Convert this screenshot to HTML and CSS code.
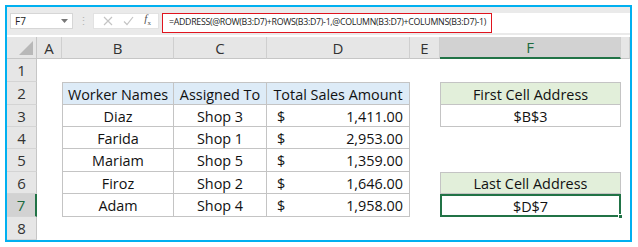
FILE: index.html
```html
<!DOCTYPE html>
<html lang="en">
<head>
    <meta charset="UTF-8">
    <title>ADDRESS formula</title>
    <link rel="stylesheet" href="styles.css">
</head>
<body>
    <div class="frame">
        <div class="formula-bar">
            <div class="name-box">
                <span class="name">F7</span>
                <svg class="caret" width="7" height="4" viewBox="0 0 7 4"><path d="M0 0h7L3.5 4z" fill="#777"/></svg>
            </div>
            <div class="dots">&#8942;</div>
            <div class="icon-box">
                <svg class="icon" width="10" height="10" viewBox="0 0 10 10"><path d="M1 1l8 8M9 1l-8 8" stroke="#c4c4c4" stroke-width="1.2"/></svg>
                <svg class="icon" width="11" height="10" viewBox="0 0 11 10"><path d="M1 5.5l3 3L10 1" stroke="#c4c4c4" stroke-width="1.2" fill="none"/></svg>
                <span class="fx"><i>f</i><sub>x</sub></span>
            </div>
            <div class="formula">
                <div class="formula-text">=ADDRESS(@ROW(B3:D7)+ROWS(B3:D7)-1,@COLUMN(B3:D7)+COLUMNS(B3:D7)-1)</div>
            </div>
        </div>

        <div class="sheet">
            <!-- column headers -->
            <div class="corner"><span class="tri"></span></div>
            <div class="col-head">A</div>
            <div class="col-head">B</div>
            <div class="col-head">C</div>
            <div class="col-head">D</div>
            <div class="col-head">E</div>
            <div class="col-head active">F</div>
            <div class="col-head"></div>

            <!-- row headers -->
            <div class="row-head r1">1</div>
            <div class="row-head r2">2</div>
            <div class="row-head r3">3</div>
            <div class="row-head r4">4</div>
            <div class="row-head r5">5</div>
            <div class="row-head r6">6</div>
            <div class="row-head r7 active">7</div>
            <div class="row-head r8">8</div>
            <div class="row-head r9"></div>

            <!-- table B2:D7 -->
            <div class="cell head top left cb r2">Worker Names</div>
            <div class="cell head top cc r2">Assigned To</div>
            <div class="cell head top cd r2">Total Sales Amount</div>

            <div class="cell left cb r3">Diaz</div>
            <div class="cell cc r3">Shop 3</div>
            <div class="cell money cd r3"><span>$</span><span>1,411.00</span></div>

            <div class="cell left cb r4">Farida</div>
            <div class="cell cc r4">Shop 1</div>
            <div class="cell money cd r4"><span>$</span><span>2,953.00</span></div>

            <div class="cell left cb r5">Mariam</div>
            <div class="cell cc r5">Shop 5</div>
            <div class="cell money cd r5"><span>$</span><span>1,359.00</span></div>

            <div class="cell left cb r6">Firoz</div>
            <div class="cell cc r6">Shop 2</div>
            <div class="cell money cd r6"><span>$</span><span>1,646.00</span></div>

            <div class="cell left cb r7">Adam</div>
            <div class="cell cc r7">Shop 4</div>
            <div class="cell money cd r7"><span>$</span><span>1,958.00</span></div>

            <!-- result cells -->
            <div class="cell result top left cf r2">First Cell Address</div>
            <div class="cell left cf r3">$B$3</div>
            <div class="cell result top left cf r6">Last Cell Address</div>
            <div class="cell selected cf r7">$D$7<span class="handle"></span></div>
        </div>
    </div>
</body>
</html>
```

FILE: styles.css
```css
* {
    margin: 0;
    padding: 0;
    box-sizing: border-box;
}

body {
    background: #fff;
    font-family: "Open Sans", sans-serif;
}

.frame {
    margin: 5px;
    width: 627px;
    height: 237px;
    border: 2px solid #00b0f0;
    background: #fff;
    overflow: hidden;
}

/* formula bar */
.formula-bar {
    height: 28px;
    background: #eaeaea;
    display: flex;
    align-items: flex-start;
    padding: 6px 0 0 3px;
}
.name-box {
    width: 63px;
    height: 16px;
    background: #fff;
    border: 1px solid #d6d6d6;
    display: flex;
    align-items: center;
    justify-content: space-between;
    padding: 0 4px 0 4px;
    font-size: 10px;
}
.name {
    color: #222;
}
.dots {
    width: 20px;
    text-align: center;
    color: #b5b5b5;
    font-size: 11px;
    line-height: 16px;
}
.icon-box {
    width: 66px;
    height: 16px;
    background: #fff;
    border: 1px solid #e2e2e2;
    display: flex;
    align-items: center;
    justify-content: space-around;
    padding: 0 2px 0 4px;
}
.fx {
    font-family: "Liberation Serif", serif;
    font-size: 11px;
    color: #555;
    line-height: 12px;
}
.fx sub {
    font-size: 7px;
}
.formula {
    margin-left: 3px;
    flex: 1;
    height: 20px;
    background: #fff;
}
.formula-text {
    width: 330px;
    height: 20px;
    border: 1.5px solid #e0141e;
    font-size: 8.8px;
    letter-spacing: -0.3px;
    line-height: 17px;
    padding-left: 6px;
    color: #222;
    white-space: nowrap;
    overflow: hidden;
}

/* grid */
.sheet {
    margin-top: 2px;
    display: grid;
    grid-template-columns: 30px 25px 112px 93px 143px 30px 181px 1fr;
    grid-template-rows: 22px 23px 23px 22px 22px 23px 22px 23px 23px 1fr;
    font-size: 14.4px;
    color: #111;
}
.corner {
    grid-row: 1;
    grid-column: 1;
    background: #e6e6e6;
    border-right: 1px solid #c6c6c6;
    border-bottom: 1px solid #c6c6c6;
    position: relative;
}
.tri {
    position: absolute;
    right: 3px;
    bottom: 3px;
    width: 0;
    height: 0;
    border-left: 14px solid transparent;
    border-bottom: 14px solid #b8b8b8;
}
.col-head {
    grid-row: 1;
    background: #e6e6e6;
    border-right: 1px solid #cfcfcf;
    border-bottom: 1px solid #c6c6c6;
    display: flex;
    align-items: center;
    justify-content: center;
    color: #333;
    font-size: 15px;
}
.col-head.active {
    background: #d2d2d2;
    border-bottom: 2px solid #217346;
    color: #1e6b3f;
}
.row-head {
    grid-column: 1;
    background: #e6e6e6;
    border-right: 1px solid #c6c6c6;
    border-bottom: 1px solid #d4d4d4;
    display: flex;
    align-items: center;
    justify-content: center;
    color: #333;
    font-size: 15px;
}
.row-head.active {
    background: #d2d2d2;
    border-right: 2px solid #217346;
    color: #1e6b3f;
}
.r1 { grid-row: 2; }
.r2 { grid-row: 3; }
.r3 { grid-row: 4; }
.r4 { grid-row: 5; }
.r5 { grid-row: 6; }
.r6 { grid-row: 7; }
.r7 { grid-row: 8; }
.r8 { grid-row: 9; }
.r9 { grid-row: 10; }

.cb { grid-column: 3; }
.cc { grid-column: 4; }
.cd { grid-column: 5; }
.cf { grid-column: 7; }

.cell {
    border-right: 1px solid #c4c4c4;
    border-bottom: 1px solid #c4c4c4;
    display: flex;
    align-items: center;
    justify-content: center;
    white-space: nowrap;
    padding-top: 1px;
}
.cell.top {
    border-top: 1px solid #c4c4c4;
}
.cell.left {
    border-left: 1px solid #c4c4c4;
}
.cell.head {
    background: #ddebf7;
}
.cell.money {
    justify-content: space-between;
    padding: 1px 6px 0 10px;
}
.cell.result {
    background: #e2efda;
}
.cell.selected {
    border: 2px solid #217346;
    position: relative;
}
.handle {
    position: absolute;
    right: -4px;
    bottom: -4px;
    width: 5px;
    height: 5px;
    background: #217346;
    border: 1px solid #fff;
}
```
